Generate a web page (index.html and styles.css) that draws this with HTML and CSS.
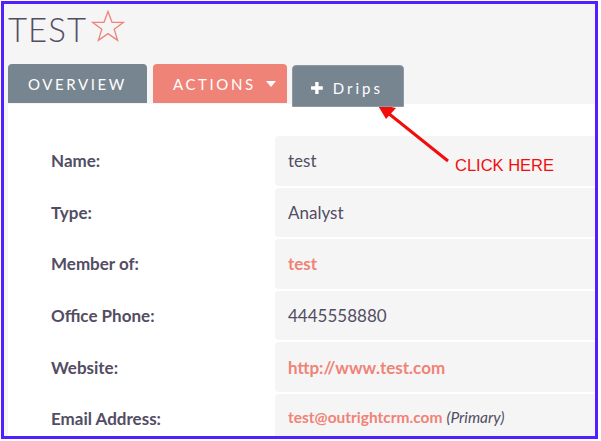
FILE: index.html
```html
<!DOCTYPE html>
<html lang="en">

<head>
    <meta charset="utf-8">
    <meta name="viewport" content="width=device-width, initial-scale=1.0">
    <title>TEST</title>
    <link rel="stylesheet" href="styles.css">
</head>

<body>
    <div class="frame">
        <div class="page">
            <h1 class="title">TEST
                <svg class="star" width="34" height="32" viewBox="0 0 34 32">
                    <polygon points="17,1.5 21,12.3 32.5,12.3 23.2,19.2 26.6,30.3 17,23.6 7.4,30.3 10.8,19.2 1.5,12.3 13,12.3" fill="none" stroke="#f08377" stroke-width="1.3" stroke-linejoin="miter"/>
                </svg>
            </h1>

            <nav class="tabs">
                <div class="tab">OVERVIEW</div>
                <div class="tab actions">ACTIONS <span class="caret"></span></div>
                <div class="tab drips">
                    <svg width="14" height="14" viewBox="0 0 14 14">
                        <path d="M5 0h4v5h5v4h-5v5h-4v-5h-5v-4h5z" fill="#fff"/>
                    </svg>
                    Drips
                </div>
            </nav>

            <div class="panel">
                <div class="row">
                    <div class="label">Name:</div>
                    <div class="value">test</div>
                </div>
                <div class="row">
                    <div class="label">Type:</div>
                    <div class="value">Analyst</div>
                </div>
                <div class="row">
                    <div class="label">Member of:</div>
                    <div class="value"><a class="link">test</a></div>
                </div>
                <div class="row">
                    <div class="label">Office Phone:</div>
                    <div class="value">4445558880</div>
                </div>
                <div class="row">
                    <div class="label">Website:</div>
                    <div class="value"><a class="link">http://www.test.com</a></div>
                </div>
                <div class="row">
                    <div class="label">Email Address:</div>
                    <div class="value small"><a class="link">test@outrightcrm.com</a> <em>(Primary)</em></div>
                </div>
            </div>
        </div>

        <!-- callout pointing at the Drips tab -->
        <svg class="arrow" width="80" height="70" viewBox="0 0 80 70">
            <line x1="72" y1="63" x2="12" y2="15" stroke="#f20d0d" stroke-width="3"/>
            <polygon points="1,6 20,10 10,21" fill="#f20d0d"/>
        </svg>
        <div class="callout">CLICK HERE</div>
    </div>
</body>

</html>
```

FILE: styles.css
```css
* {
    box-sizing: border-box;
}

body {
    margin: 0;
    background-color: #fff;
    font-family: Lato, "Open Sans", sans-serif;
    color: #534d64;
}

.frame {
    position: relative;
    margin: 1px 0 0 1px;
    width: 597px;
    height: 438px;
    border: 3px solid #5020ff;
    background-color: #f5f5f5;
    overflow: hidden;
}

.page {
    padding: 0 0 0 4px;
}

.title {
    display: flex;
    align-items: flex-start;
    margin: 0;
    height: 60px;
    padding-top: 5px;
    font-size: 33px;
    font-weight: 300;
    letter-spacing: 1px;
    line-height: 40px;
}

.star {
    margin: 1px 0 0 4px;
}

.tabs {
    display: flex;
    align-items: flex-start;
    gap: 5px;
    height: 40px;
}

.tab {
    display: flex;
    align-items: center;
    height: 39px;
    padding: 0 20px;
    background-color: #778591;
    color: #fff;
    border-radius: 4px 4px 0 0;
    font-size: 15px;
    letter-spacing: 2.6px;
}

.tab:first-child {
    width: 139px;
    margin-right: 1px;
}

.actions {
    width: 134px;
    background-color: #f08377;
}

.caret {
    margin-left: 10px;
    border-left: 5px solid transparent;
    border-right: 5px solid transparent;
    border-top: 6px solid #fff;
}

.drips {
    position: relative;
    z-index: 1;
    width: 112px;
    height: 42px;
    margin-top: 1px;
    padding-top: 4px;
    padding-left: 18px;
    font-size: 15px;
    letter-spacing: 3px;
    border: 1px solid #8d99a3;
    gap: 10px;
}

.panel {
    width: 700px;
    height: 340px;
    padding: 32px 0 0 43px;
    background-color: #fff;
}

.row {
    display: flex;
    height: 49.6px;
    margin-bottom: 2px;
}

.label {
    width: 224px;
    display: flex;
    align-items: center;
    font-size: 17px;
    font-weight: bold;
}

.value {
    flex: 1;
    display: flex;
    align-items: center;
    gap: 4px;
    padding-left: 13px;
    background-color: #f5f5f5;
    border-radius: 4px;
    font-size: 17px;
}

.link {
    color: #f08377;
    font-weight: bold;
}

.small {
    font-size: 15.5px;
    padding-bottom: 4px;
}

.arrow {
    position: absolute;
    left: 372px;
    top: 94px;
}

.callout {
    position: absolute;
    left: 451px;
    top: 152px;
    font-family: "Liberation Sans", Arial, sans-serif;
    font-size: 16.5px;
    color: #f20d0d;
}
```
